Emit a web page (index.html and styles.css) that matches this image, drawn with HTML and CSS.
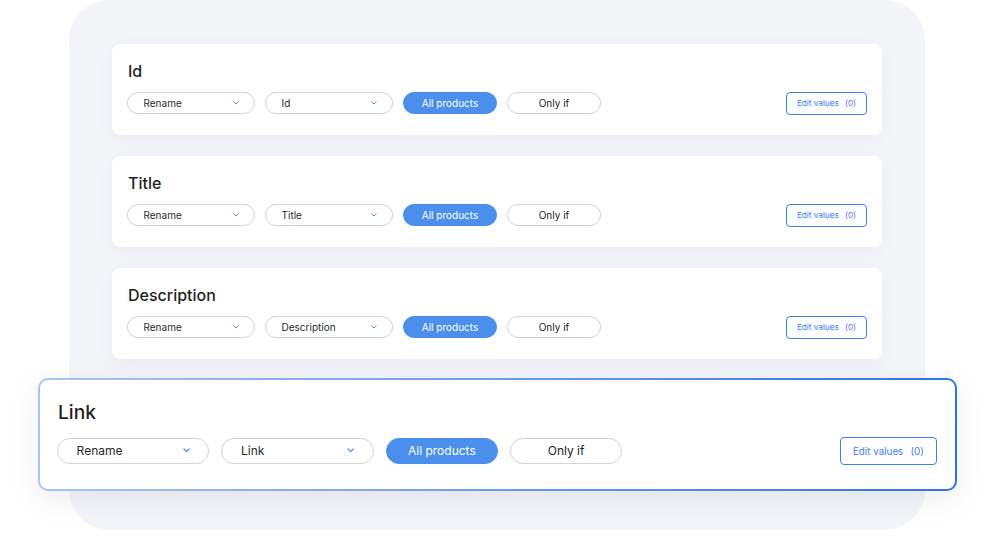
FILE: index.html
```html
<!DOCTYPE html>
<html lang="en">
  <head>
    <meta charset="UTF-8" />
    <meta name="viewport" content="width=device-width, initial-scale=1.0" />
    <title>Field mapping</title>
    <link rel="stylesheet" href="styles.css">
  </head>
  <body>
    <div class="panel">
      <div class="list">
        <div class="card">
          <div class="card-title">Id</div>
          <div class="card-row">
            <div class="select">Rename <svg class="chev" viewBox="0 0 6 4"><path d="M0.8 0.8L3 3L5.2 0.8" /></svg></div>
            <div class="select">Id <svg class="chev" viewBox="0 0 6 4"><path d="M0.8 0.8L3 3L5.2 0.8" /></svg></div>
            <div class="pill pill-on">All products</div>
            <div class="pill">Only if</div>
            <div class="edit"><span>Edit values</span><span>(0)</span></div>
          </div>
        </div>

        <div class="card">
          <div class="card-title">Title</div>
          <div class="card-row">
            <div class="select">Rename <svg class="chev" viewBox="0 0 6 4"><path d="M0.8 0.8L3 3L5.2 0.8" /></svg></div>
            <div class="select">Title <svg class="chev" viewBox="0 0 6 4"><path d="M0.8 0.8L3 3L5.2 0.8" /></svg></div>
            <div class="pill pill-on">All products</div>
            <div class="pill">Only if</div>
            <div class="edit"><span>Edit values</span><span>(0)</span></div>
          </div>
        </div>

        <div class="card">
          <div class="card-title">Description</div>
          <div class="card-row">
            <div class="select">Rename <svg class="chev" viewBox="0 0 6 4"><path d="M0.8 0.8L3 3L5.2 0.8" /></svg></div>
            <div class="select">Description <svg class="chev" viewBox="0 0 6 4"><path d="M0.8 0.8L3 3L5.2 0.8" /></svg></div>
            <div class="pill pill-on">All products</div>
            <div class="pill">Only if</div>
            <div class="edit"><span>Edit values</span><span>(0)</span></div>
          </div>
        </div>

        <div class="card card-active">
          <div class="card-title">Link</div>
          <div class="card-row">
            <div class="select">Rename <svg class="chev" viewBox="0 0 6 4"><path d="M0.8 0.8L3 3L5.2 0.8" /></svg></div>
            <div class="select">Link <svg class="chev" viewBox="0 0 6 4"><path d="M0.8 0.8L3 3L5.2 0.8" /></svg></div>
            <div class="pill pill-on">All products</div>
            <div class="pill">Only if</div>
            <div class="edit"><span>Edit values</span><span>(0)</span></div>
          </div>
        </div>
      </div>
    </div>
  </body>
</html>
```

FILE: styles.css
```css
* {
  box-sizing: border-box;
}

body {
  margin: 0;
  background: #ffffff;
  font-family: Inter, "Noto Sans", sans-serif;
  color: #222222;
}

.panel {
  margin-left: 69px;
  width: 856px;
  height: 530px;
  padding: 44px 43px;
  background: #f4f5f9;
  border-radius: 40px;
}

.list {
  display: flex;
  flex-direction: column;
  gap: 21px;
}

.card {
  font-size: 10px;
  padding: 1.6em 1.5em 2.1em;
  background: #ffffff;
  border-radius: 8px;
  box-shadow: 0 4px 18px rgba(40, 50, 90, 0.05);
}

.card-title {
  font-size: 1.6em;
  line-height: 1.375;
  font-weight: 500;
  color: #1f1f1f;
  padding-left: 1px;
}

.card-row {
  display: flex;
  align-items: center;
  gap: 1em;
  height: 2.2em;
  margin-top: 1em;
}

.select {
  width: 12.8em;
  height: 2.2em;
  flex-shrink: 0;
  display: flex;
  align-items: center;
  justify-content: space-between;
  padding: 0 1.55em 0 1.55em;
  border: 1px solid #d3d3d6;
  border-radius: 999px;
  color: #2a2a2a;
}

.chev {
  width: 0.6em;
  height: 0.4em;
  fill: none;
  stroke: #4a8fec;
  stroke-width: 1;
  stroke-linecap: round;
  stroke-linejoin: round;
}

.pill {
  width: 9.4em;
  height: 2.2em;
  flex-shrink: 0;
  display: flex;
  align-items: center;
  justify-content: center;
  border: 1px solid #d3d3d6;
  border-radius: 999px;
  color: #222222;
}

.pill-on {
  background: #4a8fec;
  border-color: #4a8fec;
  color: #ffffff;
}

.edit {
  margin-left: auto;
  width: 8.1em;
  height: 2.3em;
  flex-shrink: 0;
  display: flex;
  align-items: center;
  justify-content: center;
  gap: 0.6em;
  border: 1px solid #3d80ee;
  border-radius: 4px;
  color: #3d80ee;
}

.edit span {
  font-size: 0.82em;
}

.card-active {
  font-size: 12px;
  margin: -2px -75px 0 -74px;
  padding: 1.6em 18px 2.1em 17px;
  border: 2px solid transparent;
  border-radius: 10px;
  background:
    linear-gradient(#ffffff, #ffffff) padding-box,
    linear-gradient(90deg, #a9c5f1, #2f70ee) border-box;
  box-shadow: 0 8px 30px rgba(40, 50, 90, 0.09);
}

.card-active .select {
  width: 12.7em;
}

.card-active .pill {
  width: 9.35em;
}
```
